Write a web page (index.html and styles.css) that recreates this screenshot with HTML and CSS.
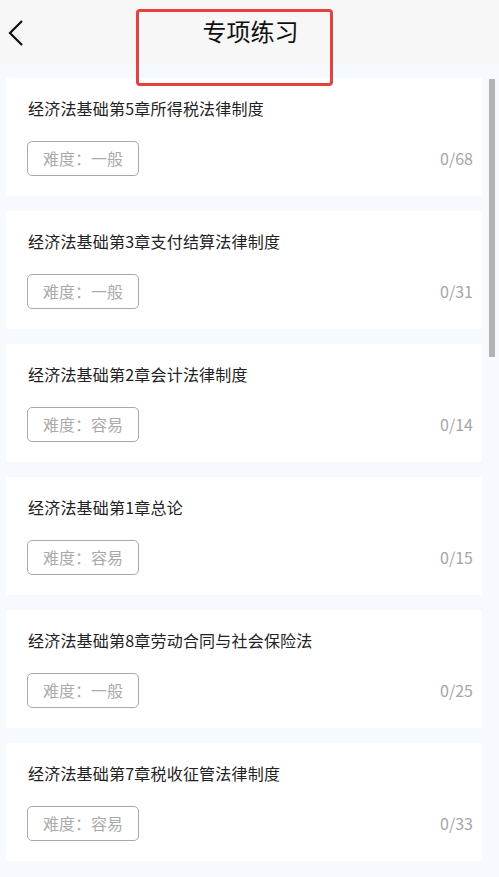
FILE: index.html
```html
<!DOCTYPE html>
<html lang="zh-CN">
<head>
<meta charset="utf-8">
<title>专项练习</title>
<link rel="stylesheet" href="styles.css">
</head>
<body>
<div class="page">
  <header class="header">
    <svg class="back" width="20" height="30" viewBox="0 0 20 30"><polyline points="15,2 3,14 15,26" fill="none" stroke="#111" stroke-width="2.2"/></svg>
    <h1 class="title">专项练习</h1>
  </header>
  <div class="highlight"></div>
  <main class="list">
    <section class="card">
      <div class="card-title">经济法基础第5章所得税法律制度</div>
      <div class="card-row"><span class="badge">难度：一般</span><span class="count">0/68</span></div>
    </section>
    <section class="card">
      <div class="card-title">经济法基础第3章支付结算法律制度</div>
      <div class="card-row"><span class="badge">难度：一般</span><span class="count">0/31</span></div>
    </section>
    <section class="card">
      <div class="card-title">经济法基础第2章会计法律制度</div>
      <div class="card-row"><span class="badge">难度：容易</span><span class="count">0/14</span></div>
    </section>
    <section class="card">
      <div class="card-title">经济法基础第1章总论</div>
      <div class="card-row"><span class="badge">难度：容易</span><span class="count">0/15</span></div>
    </section>
    <section class="card">
      <div class="card-title">经济法基础第8章劳动合同与社会保险法</div>
      <div class="card-row"><span class="badge">难度：一般</span><span class="count">0/25</span></div>
    </section>
    <section class="card">
      <div class="card-title">经济法基础第7章税收征管法律制度</div>
      <div class="card-row"><span class="badge">难度：容易</span><span class="count">0/33</span></div>
    </section>
  </main>
  <div class="scrollbar"></div>
</div>
</body>
</html>
```

FILE: styles.css
```css
* { box-sizing: border-box; }
html, body {
  margin: 0;
  padding: 0;
  background: #f6f9fe;
  font-family: "Noto Sans CJK SC", "Noto Sans", sans-serif;
  color: #222;
}
.page {
  position: relative;
  width: 499px;
  height: 877px;
  overflow: hidden;
}
.header {
  height: 64px;
  background: #f7f7f7;
  display: flex;
  align-items: center;
  justify-content: center;
  position: relative;
}
.back {
  position: absolute;
  left: 7px;
  top: 19px;
}
.title {
  margin: 0;
  font-size: 24px;
  font-weight: 400;
  line-height: 30px;
  color: #111;
  padding-left: 2px;
  transform: translateY(-1px);
}
.highlight {
  position: absolute;
  left: 136px;
  top: 9px;
  width: 197px;
  height: 77px;
  border: 3px solid #e8403f;
  border-radius: 4px;
  z-index: 2;
}
.list {
  display: flex;
  flex-direction: column;
  gap: 15px;
  padding: 14px 0 0 6px;
}
.card {
  width: 476px;
  height: 118px;
  background: #fff;
  padding: 19px 9px 0 22px;
}
.card-title {
  font-size: 16px;
  line-height: 22px;
  color: #222;
  white-space: nowrap;
  letter-spacing: 0.2px;
}
.card-row {
  margin-top: 22px;
  display: flex;
  align-items: center;
  justify-content: space-between;
}
.badge {
  display: inline-flex;
  align-items: center;
  justify-content: center;
  width: 112px;
  height: 35px;
  margin-left: -1px;
  border: 1.2px solid #a9a9a9;
  border-radius: 5px;
  font-size: 16px;
  line-height: 20px;
  color: #aaa;
  padding-bottom: 1px;
}
.count {
  font-size: 16px;
  line-height: 20px;
  color: #a6a6a6;
  padding-bottom: 1px;
}
.scrollbar {
  position: absolute;
  left: 489px;
  top: 79px;
  width: 6px;
  height: 278px;
  background: #b4b4b4;
}
```
